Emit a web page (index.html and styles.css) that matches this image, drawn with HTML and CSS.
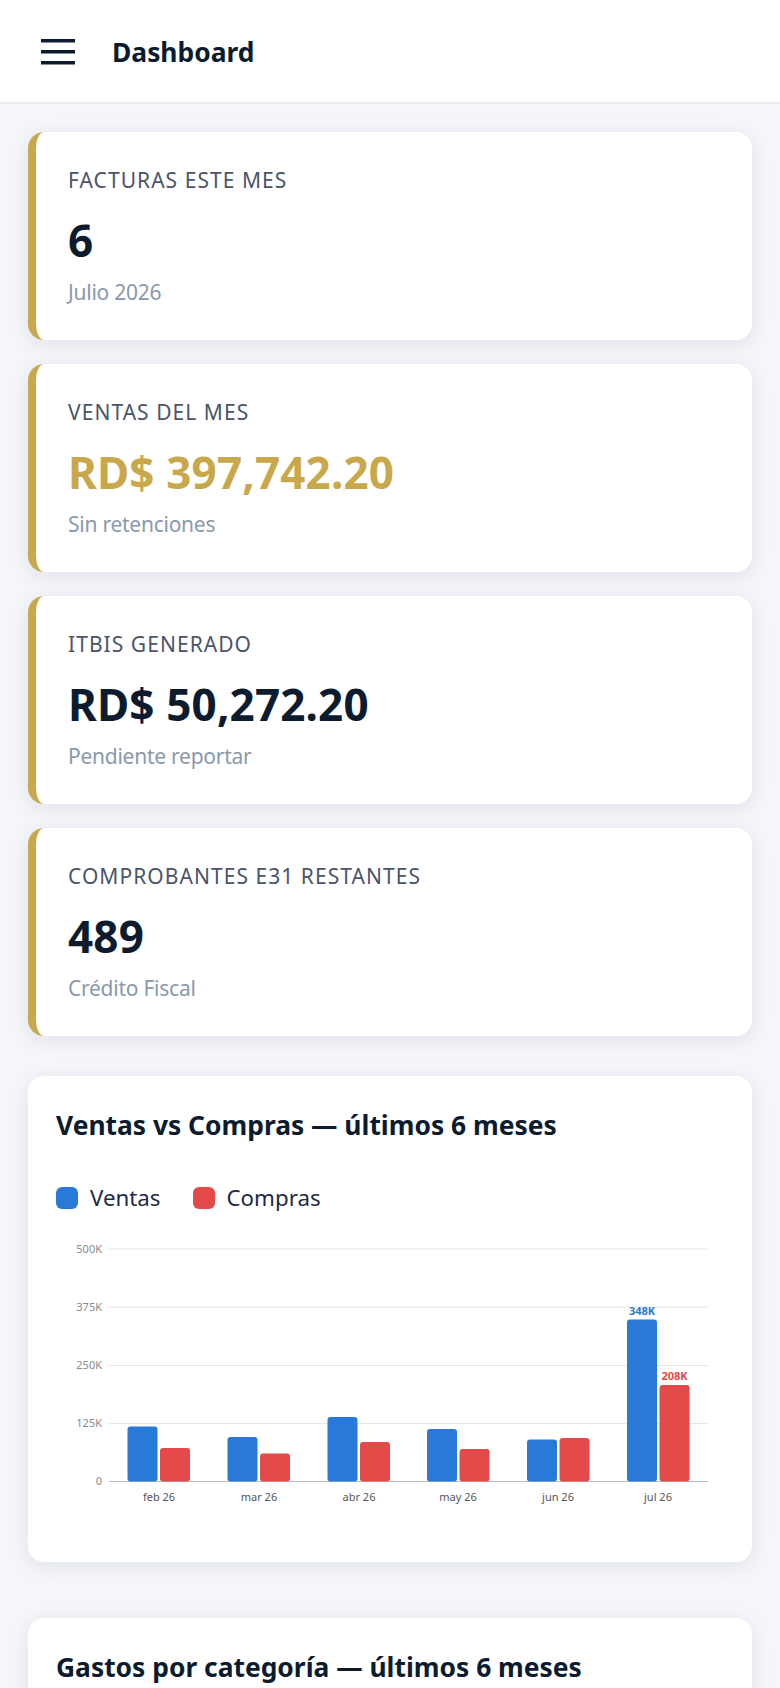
FILE: index.html
```html
<!DOCTYPE html>
<html lang="es">
<head>
    <meta charset="UTF-8">
    <meta name="viewport" content="width=device-width, initial-scale=1">
    <title>Dashboard</title>
    <link rel="stylesheet" href="styles.css">
</head>
<body>
    <header class="topbar">
        <button class="menu-button" aria-label="Menu">
            <svg width="34" height="26" viewBox="0 0 34 26">
                <rect x="0" y="0" width="34" height="3.5" fill="#0d1b2e"/>
                <rect x="0" y="11" width="34" height="3.5" fill="#0d1b2e"/>
                <rect x="0" y="22" width="34" height="3.5" fill="#0d1b2e"/>
            </svg>
        </button>
        <h1 class="topbar-title">Dashboard</h1>
    </header>

    <main class="content">
        <section class="stats">
            <div class="stat-card">
                <div class="stat-label">FACTURAS ESTE MES</div>
                <div class="stat-value">6</div>
                <div class="stat-sub">Julio 2026</div>
            </div>
            <div class="stat-card">
                <div class="stat-label">VENTAS DEL MES</div>
                <div class="stat-value gold">RD$ 397,742.20</div>
                <div class="stat-sub">Sin retenciones</div>
            </div>
            <div class="stat-card">
                <div class="stat-label">ITBIS GENERADO</div>
                <div class="stat-value">RD$ 50,272.20</div>
                <div class="stat-sub">Pendiente reportar</div>
            </div>
            <div class="stat-card">
                <div class="stat-label">COMPROBANTES E31 RESTANTES</div>
                <div class="stat-value">489</div>
                <div class="stat-sub">Crédito Fiscal</div>
            </div>
        </section>

        <section class="chart-card">
            <h2 class="chart-title">Ventas vs Compras — últimos 6 meses</h2>
            <div class="legend">
                <span class="legend-item"><i class="swatch blue"></i>Ventas</span>
                <span class="legend-item"><i class="swatch red"></i>Compras</span>
            </div>
            <svg class="chart" width="668" height="276" viewBox="0 0 668 276">
                <!-- grid -->
                <g class="grid">
                    <line x1="53" x2="652" y1="13" y2="13"/>
                    <line x1="53" x2="652" y1="71" y2="71"/>
                    <line x1="53" x2="652" y1="129.5" y2="129.5"/>
                    <line x1="53" x2="652" y1="187.5" y2="187.5"/>
                </g>
                <line class="axis" x1="53" x2="652" y1="245.5" y2="245.5"/>
                <g class="y-labels">
                    <text x="46" y="17">500K</text>
                    <text x="46" y="75">375K</text>
                    <text x="46" y="133">250K</text>
                    <text x="46" y="191">125K</text>
                    <text x="46" y="249">0</text>
                </g>
                <g class="bars-blue">
                    <rect x="71.5" y="190.5" width="30" height="55" rx="3"/>
                    <rect x="171.5" y="201" width="30" height="44.5" rx="3"/>
                    <rect x="271.5" y="181" width="30" height="64.5" rx="3"/>
                    <rect x="371" y="193" width="30" height="52.5" rx="3"/>
                    <rect x="471" y="203.5" width="30" height="42" rx="3"/>
                    <rect x="571" y="83.5" width="30" height="162" rx="3"/>
                </g>
                <g class="bars-red">
                    <rect x="104" y="212" width="30" height="33.5" rx="3"/>
                    <rect x="204" y="217.5" width="30" height="28" rx="3"/>
                    <rect x="304" y="206" width="30" height="39.5" rx="3"/>
                    <rect x="403.5" y="213" width="30" height="32.5" rx="3"/>
                    <rect x="503.5" y="202" width="30" height="43.5" rx="3"/>
                    <rect x="603.5" y="149" width="30" height="96.5" rx="3"/>
                </g>
                <text class="bar-label label-blue" x="586" y="79">348K</text>
                <text class="bar-label label-red" x="618.5" y="144">208K</text>
                <g class="x-labels">
                    <text x="103" y="265">feb 26</text>
                    <text x="203" y="265">mar 26</text>
                    <text x="303" y="265">abr 26</text>
                    <text x="402" y="265">may 26</text>
                    <text x="502" y="265">jun 26</text>
                    <text x="602" y="265">jul 26</text>
                </g>
            </svg>
        </section>

        <section class="chart-card chart-card-tall">
            <h2 class="chart-title">Gastos por categoría — últimos 6 meses</h2>
        </section>
    </main>
</body>
</html>
```

FILE: styles.css
```css
html, body {
    height: 100%;
}
body {
    font-family: "Noto Sans", "Open Sans", sans-serif;
    margin: 0;
    background-color: #f4f6fa;
    color: #0d1b2e;
    display: flex;
    flex-direction: column;
    overflow: hidden;
}
.topbar {
    flex: none;
    height: 100px;
    background-color: white;
    border-bottom: 2px solid #e8ebf0;
    display: flex;
    align-items: center;
    padding-top: 2px;
    padding-left: 41px;
    gap: 37px;
}
.menu-button {
    background: none;
    border: none;
    padding: 0;
    width: 34px;
    height: 26px;
    display: block;
}
.menu-button svg {
    display: block;
}
.topbar-title {
    margin: 0;
    font-size: 26.4px;
    font-weight: 700;
}
.content {
    flex: 1;
    min-height: 0;
    overflow: hidden;
    padding: 28px 28px 0;
}
.stats {
    display: flex;
    flex-direction: column;
    gap: 24px;
}
.stat-card {
    background-color: white;
    border-left: 8px solid #c9a84c;
    border-radius: 16px;
    height: 208px;
    box-sizing: border-box;
    padding: 35px 32px 0;
    box-shadow: 0 4px 20px rgba(13,27,46,0.09);
}
.stat-label {
    font-size: 21px;
    line-height: 27px;
    letter-spacing: 1.05px;
    color: #4a5568;
}
.stat-value {
    font-size: 44px;
    line-height: 60px;
    font-weight: 700;
    letter-spacing: 0.15px;
    margin-top: 15.5px;
}
.stat-value.gold {
    color: #c9a84c;
}
.stat-sub {
    font-size: 21px;
    line-height: 28px;
    letter-spacing: -0.25px;
    margin-top: 8px;
    color: #8a99ab;
}
.chart-card {
    background-color: white;
    border-radius: 16px;
    margin-top: 40px;
    padding: 31px 28px 28px;
    box-shadow: 0 4px 20px rgba(13,27,46,0.09);
}
.chart-card + .chart-card {
    margin-top: 56px;
}
.chart-card-tall {
    min-height: 400px;
}
.chart-title {
    margin: 0;
    font-size: 26.4px;
    line-height: 36px;
    font-weight: 700;
}
.legend {
    display: flex;
    gap: 32px;
    margin-top: 40px;
    font-size: 22.3px;
    line-height: 30px;
    color: #1f2a44;
}
.legend-item {
    display: flex;
    align-items: center;
    gap: 12px;
}
.swatch {
    width: 22px;
    height: 22px;
    border-radius: 6px;
}
.swatch.blue {
    background-color: #2979d8;
}
.swatch.red {
    background-color: #e44a4a;
}
.chart {
    display: block;
    margin-top: 23px;
    margin-bottom: 22px;
}
.grid line {
    stroke: #e6e6e6;
    stroke-width: 1;
}
.axis {
    stroke: #bdbdbd;
    stroke-width: 1;
}
.y-labels text {
    font-size: 11px;
    fill: #8a8a8a;
    text-anchor: end;
}
.x-labels text {
    font-size: 11px;
    fill: #555;
    text-anchor: middle;
}
.bars-blue rect {
    fill: #2979d8;
}
.bars-red rect {
    fill: #e44a4a;
}
.bar-label {
    font-size: 11px;
    font-weight: 700;
    text-anchor: middle;
}
.label-blue {
    fill: #2979d8;
}
.label-red {
    fill: #e44a4a;
}
```
